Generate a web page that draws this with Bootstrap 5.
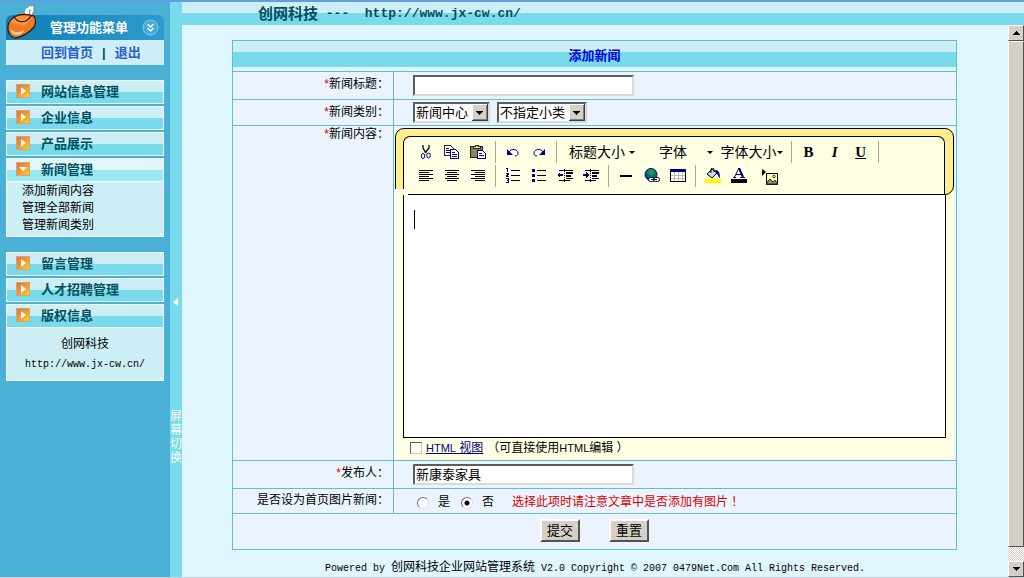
<!DOCTYPE html>
<html lang="zh-CN">
<head>
<meta charset="utf-8">
<meta name="viewport" content="width=device-width, initial-scale=1">
<title>添加新闻</title>
<link rel="stylesheet" href="https://cdn.jsdelivr.net/npm/bootstrap@5.3.0/dist/css/bootstrap.min.css">
<style>
:root{--line:#5fbfcf;--cyan:#78daea;--pale:#cdeef4;--cell:#ebf4fe;--ink:#00505f}
body{font:12px/17px "Liberation Sans","Noto Sans CJK SC",sans-serif;color:#000;background:#e0f6fe}
.zh{font-family:"Noto Sans CJK SC",sans-serif;font-size:12px}
.lat{font-family:"Liberation Mono","Noto Sans CJK SC",monospace;font-size:10px}
.app{border-top:2px solid #5f9fdc;border-bottom:2px solid #c4d2dc}
a{text-decoration:none}
/* sidebar */
.side{width:170px;background:#4bb0d6;padding:13px 6px 0}
.side-head{height:25px;border-radius:6px 6px 0 0;background:linear-gradient(90deg,#0f80b4,#2c9bcd);color:#fff;font-size:13px;font-weight:700;padding:0 5px 0 44px}
.side-logo{position:absolute;left:0;top:-12px}
.side-links{height:25px;background:var(--pale);font-size:13px;font-weight:700;color:var(--ink);padding-left:35px;gap:9px}
.side-links a{color:#2a5fc8}
.menu-item{height:24px;border:1px solid #f2fcff;background:linear-gradient(#cdeef4 11px,#78daea 11px);color:var(--ink);font-size:13px;font-weight:700;padding:0 0 0 9px;gap:11px;text-align:left;line-height:16px}
.menu-item.open{background:linear-gradient(#e2f6fa 11px,#98e9f2 11px)}
.menu-item svg{margin-bottom:3px}
.menu-list{gap:2px;margin-top:15px}
.menu-body{background:var(--pale);border:1px solid #f2fcff;border-top:0}
.menu-body a{color:#000;display:block}
.menu-links{padding:1px 0 2px 15px}
.menu-about{padding:8px 0 7px}
.menu-about div{margin-bottom:3px}
.toggle-bar{width:12px;background:var(--cyan);color:#fff;border:0;padding:296px 0 0;line-height:14px;font-size:12px}
.toggle-bar span{margin-top:102px;width:12px}
/* main */
.top-strip{height:23px;background:linear-gradient(#cdeef4 11px,#78daea 11px);color:var(--ink);font-size:15px;font-weight:700;padding-left:76px}
.top-strip .lat{font-size:13px;white-space:pre}
.sheet{margin:15px 51px 0 50px;border:1px solid var(--line);background:var(--cell)}
.sheet-title{height:30px;margin:0;background:linear-gradient(#cdeef4 11px,#78daea 11px,#78daea 26px,#e0f6fe 26px);color:#0000d8;font-size:13px;font-weight:700}
.field-row{border-top:1px solid var(--line)}
.field-name{width:161px;flex:none;border-right:1px solid var(--line);padding:4px 4px 0 0;text-align:right}
.field-name i{color:#e00000;font-style:normal}
.field-box{padding:3px 0 3px 19px}
.pick-box{padding-top:2px;padding-bottom:2px;gap:7px}
.pic-name{padding-top:3px;padding-bottom:4px}
.pic-box{padding-top:3px;padding-bottom:0}
.pic-box label{margin:0 11px 0 9px}
.pic-note{color:#d80000;margin-left:7px}
.submit-row{gap:29px;padding:5px 0 7px}
.win-box{border:2px solid;border-color:#5c5c5c #dadada #dadada #5c5c5c;background:#fff;height:21px;padding:0 1px 2px;font-size:13px;line-height:17px;border-radius:0;color:#000}
.win-input{width:221px}
.win-select{appearance:none;padding:0 17px 0 1px;background:#fff url("data:image/svg+xml,%3Csvg xmlns='http://www.w3.org/2000/svg' width='16' height='17' shape-rendering='crispEdges'%3E%3Cpath fill='%23404040' d='M0 0h16v17H0z'/%3E%3Cpath fill='%23fff' d='M0 0h15v16H0z'/%3E%3Cpath fill='%23808080' d='M1 1h14v15H1z'/%3E%3Cpath fill='%23d4d0c8' d='M1 1h13v14H1z'/%3E%3Cpath d='M4 7h7v1H4zM5 8h5v1H5zM6 9h3v1H6zM7 10h1v1H7z'/%3E%3C/svg%3E") right center no-repeat}
.w-main{width:77px}.w-sub{width:90px}
.win-btn{height:23px;width:40px;padding:0;background:#d4d0c8;border:2px solid;border-color:#fff #55534f #55534f #fff;font-size:13px;line-height:17px;color:#000}
.win-radio{appearance:none;width:12px;height:12px;margin:0;border-radius:50%;border:1px solid;border-color:#707070 #ddd #ddd #707070;background:#fff}
.win-radio:checked{background:radial-gradient(#000 2px,#fff 3px)}
.win-check{appearance:none;width:12px;height:12px;margin:0;border:1px solid;border-color:#606060 #ccc #ccc #606060;background:#fff}
/* rich text editor */
.editor{margin:2px 2px 0 1px;background:#ffffe3}
.editor-frame{border:1px solid #000;border-radius:9px 9px 9px 0;background:#ffee8c;padding:7px 8px 0 7px}
.editor-frame::after{content:"";position:absolute;left:-1px;bottom:-1px;width:13px;height:6px;background:#ffffe8}
.editor-tools{border:1px solid #000;border-bottom:0;border-radius:7px 7px 0 0;background:#ffffe3;padding:3px 0 6px 9px}
.tool-row{height:24px}
.tool{width:26px;height:24px;padding:0;border:0;background:none;color:#000;font:700 15px/20px "Liberation Serif",serif;display:flex;align-items:center;justify-content:center}
.tool-sep{width:9px;height:22px;background:linear-gradient(#a8a690,#a8a690) center/1px 100% no-repeat}
.tool-menu{border:0;background:none;padding:0;font-size:14px;color:#000;gap:4px}
.tool-menu::after{content:"";border:3px solid transparent;border-top-color:#000;border-bottom:0}
.editor-page{height:243px;border:1px solid #000;border-top:0;background:#fff;resize:none;display:block;width:100%;outline:0}
.editor-body{padding:0 8px 0 8px}
.caret{position:absolute;left:19px;top:15px;width:1px;height:19px;background:#000}
.editor-foot{height:22px;padding:0 0 2px 15px;gap:4px}
.editor-foot b{font-size:11px;font-weight:400}
.editor-foot a{color:#000080;text-decoration:underline}
.footer-note{height:27px;white-space:pre;padding-top:7px}
/* scroll bar */
.scroller{width:16px;background:repeating-conic-gradient(#fff 0 25%,#d4d0c8 0 50%) 0 0/2px 2px}
.bev{background:#d4d0c8;border:1px solid;border-color:#fff #505050 #505050 #fff;width:16px;padding:0;height:16px}
.thumb{margin-bottom:14px}
</style>
</head>
<body>
<div class="app d-flex min-vh-100">
  <aside class="side flex-shrink-0">
    <div class="side-head position-relative d-flex align-items-center justify-content-between">
      <svg class="side-logo" width="34" height="38" viewBox="0 0 34 38">
        <path d="M19 13C17 8 19 5 22 4l2-2 2 1 2-1v6l-4 8z" fill="#fff" stroke="#6d8990"/>
        <path d="M23 14l1-8" stroke="#788d94" fill="none"/>
        <path d="M2 23C3 18 7 14 12 12c5-1 11-1 16 1 2 3 2 8 0 11-4 5-10 9-18 11C5 35 1 29 2 23z" fill="#f07a22" stroke="#301c16" stroke-width="1.300"/>
        <path d="M4 20c3-5 7-7 12-7 4 0 7 0 10 1-2 4-5 6-8 9-5-2-9-3-14-3z" fill="#ff9240"/>
        <path d="M8 14c2 3 6 6 12 4 2-1 4-3 5-5" fill="none" stroke="#301c16" stroke-width="1.300"/>
        <path d="M4 26c3 4 10 4 14 1 0 4-11 9-14-1z" fill="#ffd9ae"/>
      </svg>
      <span>管理功能菜单</span>
      <svg width="17" height="17" viewBox="0 0 17 17" fill="none"><circle cx="8.500" cy="8.500" r="7.500" fill="#46aad4" stroke="#8bd3ee"/><path d="M5.500 5l3 3 3-3M5.500 9l3 3 3-3" stroke="#fff" stroke-width="1.500"/></svg>
    </div>
    <div class="side-links d-flex align-items-center"><a href="#">回到首页</a><span>|</span><a href="#">退出</a></div>

    <svg width="0" height="0" class="position-absolute"><defs>
      <linearGradient id="og" x2="1" y2="1"><stop stop-color="#d77a3c"/><stop offset=".5" stop-color="#f6982c"/><stop offset="1" stop-color="#ffd21c"/></linearGradient>
      <g id="go"><path d="M0 0h14v14H0z" fill="#c8a58c"/><path d="M1 1h12v12H1z" fill="url(#og)"/><path d="M5 3l5 4-5 4z" fill="#fff"/></g>
      <g id="down"><path d="M0 0h14v14H0z" fill="#c8a58c"/><path d="M1 1h12v12H1z" fill="url(#og)"/><path d="M3 5h8l-4 4z" fill="#fff"/></g>
    </defs></svg>

    <nav class="menu-list d-flex flex-column">
      <button type="button" class="menu-item d-flex align-items-center"><svg width="14" height="14"><use href="#go"/></svg>网站信息管理</button>
      <button type="button" class="menu-item d-flex align-items-center"><svg width="14" height="14"><use href="#go"/></svg>企业信息</button>
      <button type="button" class="menu-item d-flex align-items-center"><svg width="14" height="14"><use href="#go"/></svg>产品展示</button>
      <div>
        <button type="button" class="menu-item open w-100 d-flex align-items-center"><svg width="14" height="14"><use href="#down"/></svg>新闻管理</button>
        <div class="menu-body menu-links"><a href="#">添加新闻内容</a><a href="#">管理全部新闻</a><a href="#">管理新闻类别</a></div>
      </div>
    </nav>
    <nav class="menu-list d-flex flex-column">
      <button type="button" class="menu-item d-flex align-items-center"><svg width="14" height="14"><use href="#go"/></svg>留言管理</button>
      <button type="button" class="menu-item d-flex align-items-center"><svg width="14" height="14"><use href="#go"/></svg>人才招聘管理</button>
      <div>
        <button type="button" class="menu-item w-100 d-flex align-items-center"><svg width="14" height="14"><use href="#go"/></svg>版权信息</button>
        <div class="menu-body menu-about text-center"><div>创网科技</div><a href="#" class="lat">http://www.jx-cw.cn/</a></div>
      </div>
    </nav>
  </aside>

  <button type="button" class="toggle-bar flex-shrink-0 d-flex flex-column align-items-center justify-content-start">
    <svg width="6" height="9"><path d="M0 4l5-4v8z" fill="#fff"/></svg>
    <span>屏幕切换</span>
  </button>

  <div class="flex-grow-1 d-flex flex-column">
    <header class="top-strip d-flex align-items-center"><span>创网科技</span><span class="lat"> ---  http://www.jx-cw.cn/</span></header>
    <div class="d-flex flex-grow-1">
      <main class="flex-grow-1">
        <form class="sheet">
          <h1 class="sheet-title d-flex align-items-center justify-content-center">添加新闻</h1>
          <div class="field-row d-flex">
            <label class="field-name" for="title"><i>*</i>新闻标题：</label>
            <div class="field-box"><input id="title" type="text" class="win-box win-input d-block"></div>
          </div>
          <div class="field-row d-flex">
            <label class="field-name" for="cat"><i>*</i>新闻类别：</label>
            <div class="field-box pick-box d-flex">
              <select id="cat" class="win-box win-select w-main"><option>新闻中心</option></select>
              <select aria-label="小类" class="win-box win-select w-sub"><option>不指定小类</option></select>
            </div>
          </div>
          <div class="field-row d-flex">
            <label class="field-name pt-0" for="content"><i>*</i>新闻内容：</label>
            <div class="flex-grow-1">
              <div class="editor">
                <div class="editor-frame position-relative">
                  <div class="editor-tools">
                    <div class="tool-row d-flex align-items-center">
                      <button type="button" class="tool" aria-label="剪切"><svg width="16" height="16" fill="none"><path d="M5 1v3l3 5M11 1v3L7 9" stroke="#000" stroke-width="1.300"/><ellipse cx="5" cy="12" rx="1.800" ry="2.500" stroke="#000080"/><ellipse cx="10.500" cy="11.500" rx="1.800" ry="2.500" stroke="#000080"/></svg></button>
                      <button type="button" class="tool" aria-label="复制"><svg width="16" height="16" shape-rendering="crispEdges"><path d="M.5 1.500h6l3 3v7h-9z" fill="#fff" stroke="#222"/><path d="M6.500 5.500h5l3 3v6h-8z" fill="#fff" stroke="#000080"/><path d="M2 4.500h3M2 6.500h4M2 8.500h4M8 8.500h3M8 10.500h5M8 12.500h5" stroke="#000080"/></svg></button>
                      <button type="button" class="tool" aria-label="粘贴"><svg width="16" height="16" shape-rendering="crispEdges"><path d="M.5 2.500h12v11H.5z" fill="#8a8850" stroke="#222"/><path d="M3 4h7V2H8V1H5v1H3z" fill="#eee59a" stroke="#222"/><path d="M7.500 6.500h5l3 3v5h-8z" fill="#fff" stroke="#000080"/><path d="M9 9.500h3M9 11.500h5" stroke="#000080"/></svg></button>
                      <span class="tool-sep"></span>
                      <button type="button" class="tool" aria-label="撤销"><svg width="16" height="16"><path d="M4 8c2-4 9-3 9 1 0 2-1 3-3 3" fill="none" stroke="#000080"/><path d="M2 5v6h6z" fill="#000080"/></svg></button>
                      <button type="button" class="tool" aria-label="重做"><svg width="16" height="16"><path d="M12 8c-2-4-9-3-9 1 0 2 1 3 3 3" fill="none" stroke="#000080"/><path d="M14 5v6H8z" fill="#000080"/></svg></button>
                      <span class="tool-sep"></span>
                      <button type="button" class="tool-menu d-flex align-items-center ms-2">标题大小</button>
                      <button type="button" class="tool-menu d-flex align-items-center ms-4">字体&nbsp;&nbsp;&nbsp;&nbsp;</button>
                      <button type="button" class="tool-menu d-flex align-items-center ms-2 gap-0">字体大小</button>
                      <span class="tool-sep ms-1"></span>
                      <button type="button" class="tool">B</button>
                      <button type="button" class="tool fst-italic">I</button>
                      <button type="button" class="tool text-decoration-underline">U</button>
                      <span class="tool-sep"></span>
                    </div>
                    <div class="tool-row d-flex align-items-center">
                      <button type="button" class="tool" aria-label="左对齐"><svg width="16" height="16" shape-rendering="crispEdges"><path d="M1 2.500h14M1 4.500h10M1 6.500h14M1 8.500h10M1 10.500h14M1 12.500h10" stroke="#000"/></svg></button>
                      <button type="button" class="tool" aria-label="居中"><svg width="16" height="16" shape-rendering="crispEdges"><path d="M1 2.500h14M3 4.500h10M1 6.500h14M3 8.500h10M1 10.500h14M3 12.500h10" stroke="#000"/></svg></button>
                      <button type="button" class="tool" aria-label="右对齐"><svg width="16" height="16" shape-rendering="crispEdges"><path d="M1 2.500h14M5 4.500h10M1 6.500h14M5 8.500h10M1 10.500h14M5 12.500h10" stroke="#000"/></svg></button>
                      <span class="tool-sep"></span>
                      <button type="button" class="tool" aria-label="编号列表"><svg width="16" height="16" shape-rendering="crispEdges"><path d="M6 2.500h9M6 7.500h9M6 12.500h9" stroke="#000"/><path d="M1 0h2v4H2V1H1zM1 5h3v2H3v1h1v1H1V7h1V6H1zM1 10h3v5H1v-1h2v-1H2v-1h1v-1H1z" fill="#000080"/></svg></button>
                      <button type="button" class="tool" aria-label="项目列表"><svg width="16" height="16" shape-rendering="crispEdges"><path d="M6 2.500h9M6 7.500h9M6 12.500h9" stroke="#000"/><path d="M1 1h3v3H1zM1 6h3v3H1zM1 11h3v3H1z" fill="#000080"/></svg></button>
                      <button type="button" class="tool" aria-label="减少缩进"><svg width="16" height="16" shape-rendering="crispEdges"><path d="M2 2.500h14M9 4.500h7M9 5.500h7M9 7.500h5M9 8.500h5M9 10.500h7M2 12.500h11" stroke="#000"/><path d="M7.500 1v14" stroke="#000" stroke-dasharray="1 1"/><path d="M0 7l3-3v2h3v2H3v2z" fill="#000080"/></svg></button>
                      <button type="button" class="tool" aria-label="增加缩进"><svg width="16" height="16" shape-rendering="crispEdges"><path d="M2 2.500h14M9 4.500h7M9 5.500h7M9 7.500h5M9 8.500h5M9 10.500h7M2 12.500h11" stroke="#000"/><path d="M7.500 1v14" stroke="#000" stroke-dasharray="1 1"/><path d="M6 7L3 4v2H0v2h3v2z" fill="#000080"/></svg></button>
                      <span class="tool-sep"></span>
                      <button type="button" class="tool" aria-label="水平线"><svg width="16" height="16" shape-rendering="crispEdges"><path d="M2 7h12v2H2z"/></svg></button>
                      <button type="button" class="tool" aria-label="链接"><svg width="16" height="16"><circle cx="7" cy="6.500" r="6" fill="#087070" stroke="#000080"/><path d="M4 2l4-1 3 3-3 4-3-2z" fill="#2a9146"/><path d="M1 5l3 3v3z" fill="#1717b8"/><rect x="4.500" y="9.500" width="6" height="4" rx="2" fill="#fff" stroke="#000"/><rect x="9.500" y="9.500" width="6" height="4" rx="2" fill="#fff" stroke="#000"/><path d="M7 11.500h6" stroke="#000"/></svg></button>
                      <button type="button" class="tool" aria-label="表格"><svg width="16" height="16" shape-rendering="crispEdges"><path d="M.5 1.500h15v12H.5z" fill="#fff" stroke="#000"/><path d="M0 1h16v3H0z" fill="#000080"/><path d="M4.500 4v9M8.500 4v9M12.500 4v9M1 7.500h14M1 10.500h14" stroke="#bbb"/></svg></button>
                      <span class="tool-sep"></span>
                      <button type="button" class="tool" aria-label="背景色"><svg width="16" height="16"><path d="M0 11h16v4H0z" fill="#ff0"/><path d="M2 6l5-5 5 4-5 5z" fill="#d6d6e0" stroke="#000"/><path d="M6 5V1q1-2 3 0v3" fill="none" stroke="#000"/><path d="M10 2c4 0 5 3 5 8-2-1-2-4-4-5z" fill="#000080"/></svg></button>
                      <button type="button" class="tool" aria-label="文字颜色"><svg width="16" height="16"><path d="M0 11h16v4H0z"/><path d="M2 9.500h3M9 9.500h5M3.500 9L8 0l3.500 9M5 6.500h5" stroke="#000080" fill="none"/><path d="M8 0l4 9" stroke="#000080" stroke-width="2"/></svg></button>
                      <button type="button" class="tool ms-1" aria-label="插入图片"><svg width="17" height="17"><path d="M1 1l4 3-4 4z"/><path d="M5.500 5.500h11v11h-11z" fill="#ffff9c" stroke="#000"/><path d="M6 16v-2l3-3 3 3 2-2 2 3v1z" fill="#888" stroke="#333"/><circle cx="13" cy="8.500" r="1.200" fill="#fff" stroke="#333"/></svg></button>
                    </div>
                  </div>
                </div>
                <div class="editor-body position-relative"><textarea id="content" class="editor-page"></textarea><span class="caret"></span></div>
                <div class="editor-foot d-flex align-items-center">
                  <input type="checkbox" id="src" class="win-check"><label for="src"><a href="#"><b>HTML</b> 视图</a></label>
                  <span>（可直接使用<b>HTML</b>编辑 ）</span>
                </div>
              </div>
            </div>
          </div>
          <div class="field-row d-flex">
            <label class="field-name" for="author"><i>*</i>发布人：</label>
            <div class="field-box"><input id="author" type="text" value="新康泰家具" class="win-box win-input d-block"></div>
          </div>
          <div class="field-row d-flex">
            <div class="field-name pic-name">是否设为首页图片新闻：</div>
            <div class="field-box pic-box d-flex align-items-center">
              <input type="radio" name="pic" id="yes" class="win-radio ms-1"><label for="yes">是</label>
              <input type="radio" name="pic" id="no" class="win-radio" checked><label for="no">否</label>
              <span class="pic-note">选择此项时请注意文章中是否添加有图片 ！</span>
            </div>
          </div>
          <div class="field-row submit-row d-flex justify-content-center"><button type="submit" class="win-btn">提交</button><button type="reset" class="win-btn">重置</button></div>
        </form>
        <footer class="footer-note lat text-center">Powered by <span class="zh">创网科技企业网站管理系统</span> V2.0 Copyright © 2007 0479Net.Com All Rights Reserved.</footer>
      </main>
      <div class="scroller flex-shrink-0 d-flex flex-column">
        <button type="button" class="bev d-flex align-items-center justify-content-center" aria-label="向上"><svg width="7" height="4" shape-rendering="crispEdges"><path d="M3 0h1v1h1v1h1v1h1v1H0V3h1V2h1V1h1z"/></svg></button>
        <div class="bev thumb flex-grow-1"></div>
        <button type="button" class="bev d-flex align-items-center justify-content-center" aria-label="向下"><svg width="7" height="4" shape-rendering="crispEdges"><path d="M0 0h7v1H6v1H5v1H4v1H3V3H2V2H1V1H0z"/></svg></button>
      </div>
    </div>
  </div>
</div>
<script src="https://cdn.jsdelivr.net/npm/bootstrap@5.3.0/dist/js/bootstrap.bundle.min.js"></script>
</body>
</html>
